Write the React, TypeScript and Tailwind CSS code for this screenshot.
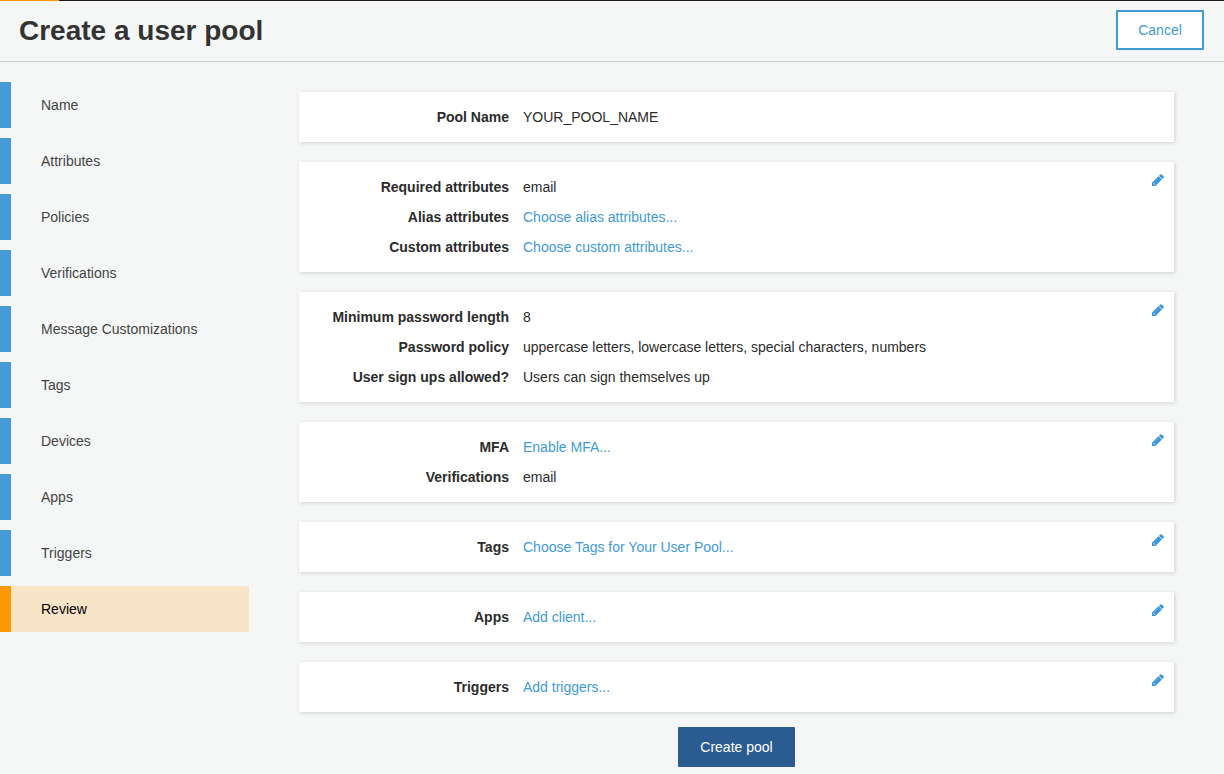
type Row = { label: string; value: string; link?: boolean };
type Section = { id: string; editable: boolean; rows: Row[] };

const steps = [
  "Name",
  "Attributes",
  "Policies",
  "Verifications",
  "Message Customizations",
  "Tags",
  "Devices",
  "Apps",
  "Triggers",
  "Review",
];

const sections: Section[] = [
  { id: "name", editable: false, rows: [{ label: "Pool Name", value: "YOUR_POOL_NAME" }] },
  {
    id: "attributes",
    editable: true,
    rows: [
      { label: "Required attributes", value: "email" },
      { label: "Alias attributes", value: "Choose alias attributes...", link: true },
      { label: "Custom attributes", value: "Choose custom attributes...", link: true },
    ],
  },
  {
    id: "policies",
    editable: true,
    rows: [
      { label: "Minimum password length", value: "8" },
      {
        label: "Password policy",
        value: "uppercase letters, lowercase letters, special characters, numbers",
      },
      { label: "User sign ups allowed?", value: "Users can sign themselves up" },
    ],
  },
  {
    id: "mfa",
    editable: true,
    rows: [
      { label: "MFA", value: "Enable MFA...", link: true },
      { label: "Verifications", value: "email" },
    ],
  },
  {
    id: "tags",
    editable: true,
    rows: [{ label: "Tags", value: "Choose Tags for Your User Pool...", link: true }],
  },
  { id: "apps", editable: true, rows: [{ label: "Apps", value: "Add client...", link: true }] },
  {
    id: "triggers",
    editable: true,
    rows: [{ label: "Triggers", value: "Add triggers...", link: true }],
  },
];

function PencilIcon() {
  return (
    <svg viewBox="0 0 1536 1792" className="block h-[14px] w-[12px] fill-[#3a96d9]" aria-hidden="true">
      <path opacity="0.55" d="M832 416l416 416-832 832h-416v-416z" />
      <path d="M363 1536l91-91-235-235-91 91v107h128v128h107zM886 608q0-22-22-22-10 0-17 7l-542 542q-7 7-7 17 0 22 22 22 10 0 17-7l542-542q7-7 7-17zM832 416l416 416-832 832h-416v-416zM1515 512q0 53-37 90l-166 166-416-416 166-165q36-38 90-38 53 0 91 38l235 234q37 39 37 91z" />
    </svg>
  );
}

function ReviewCard({ section }: { section: Section }) {
  return (
    <section className="flex bg-white py-2.5 shadow-[1px_1px_4px_rgba(0,0,0,0.15)]">
      <dl className="flex-1">
        {section.rows.map((row) => (
          <div key={row.label} className="flex h-[30px] items-center">
            <dt className="w-[210px] text-right font-bold">{row.label}</dt>
            <dd className="ml-3.5">
              {row.link ? (
                <a href="#" className="text-[#3f9ad8]">
                  {row.value}
                </a>
              ) : (
                row.value
              )}
            </dd>
          </div>
        ))}
      </dl>
      {section.editable && (
        <button type="button" aria-label="Edit" className="mt-px mr-2.5 self-start">
          <PencilIcon />
        </button>
      )}
    </section>
  );
}

export default function App() {
  return (
    <div className="flex h-[774px] flex-col overflow-hidden bg-[#f5f7f7] font-['Liberation_Sans',Arial,sans-serif] text-[14px] leading-5 text-[#2b2b2b]">
      <div className="flex h-px shrink-0 bg-[#1c1a1d]">
        <div className="w-[59px] bg-[#ff9900]" />
      </div>
      <header className="flex h-[61px] shrink-0 items-center justify-between border-b border-[#cccccc] pr-5 pl-[19px]">
        <h1 className="text-[28px] leading-[40px] font-bold text-[#333]">Create a user pool</h1>
        <button
          type="button"
          className="mt-px mb-[3px] h-10 w-[88px] rounded-[1px] border-2 border-[#3f9ad8] bg-white text-[#4299d5]"
        >
          Cancel
        </button>
      </header>
      <div className="flex min-h-0 flex-1">
        <nav className="flex w-[249px] flex-col gap-2.5 pt-5">
          {steps.map((step) => (
            <a
              key={step}
              href="#"
              className={
                step === "Review"
                  ? "flex h-[46px] items-center border-l-[11px] border-[#ff9900] bg-[#f8e5c7] pl-[30px] text-black"
                  : "flex h-[46px] items-center border-l-[11px] border-[#449bd7] pl-[30px] text-[#444]"
              }
            >
              {step}
            </a>
          ))}
        </nav>
        <main className="ml-[50px] w-[875px] pt-[30px]">
          <div className="flex flex-col gap-5">
            {sections.map((section) => (
              <ReviewCard key={section.id} section={section} />
            ))}
          </div>
          <div className="mt-[15px] flex justify-center">
            <button type="button" className="h-10 w-[117px] rounded-[1px] bg-[#2a5c92] text-white">
              Create pool
            </button>
          </div>
        </main>
      </div>
    </div>
  );
}
